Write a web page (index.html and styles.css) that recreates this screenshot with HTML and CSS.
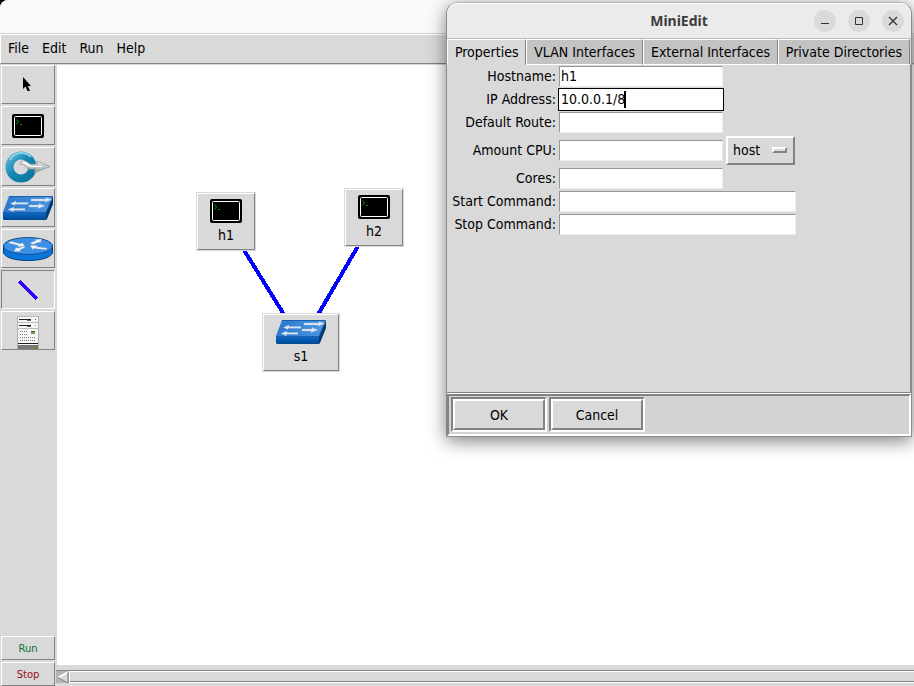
FILE: index.html
```html
<!DOCTYPE html>
<html lang="en">
<head>
<meta charset="utf-8">
<title>MiniEdit</title>
<link rel="stylesheet" href="styles.css">
</head>
<body>
<svg class="defs" width="0" height="0" aria-hidden="true">
  <defs>
    <linearGradient id="g-front" x1="0" y1="0" x2="0" y2="1"><stop offset="0" stop-color="#0a6ccc"/><stop offset="1" stop-color="#004890"/></linearGradient>
    <linearGradient id="g-top" x1="0" y1="0" x2="1" y2="0"><stop offset="0" stop-color="#2a78cc"/><stop offset="1" stop-color="#4c98e4"/></linearGradient>
    <linearGradient id="g-ring" x1="0" y1="0" x2="1" y2="1"><stop offset="0" stop-color="#56b4d8"/><stop offset=".45" stop-color="#1487b4"/><stop offset="1" stop-color="#0a789f"/></linearGradient>
    <linearGradient id="g-silver" x1="0" y1="0" x2="0" y2="1"><stop offset="0" stop-color="#f2f2f2"/><stop offset="1" stop-color="#8e969a"/></linearGradient>
    <symbol id="i-host" viewBox="0 0 32 24">
      <rect width="32" height="24" rx="2" fill="#000"/>
      <rect x="2.5" y="2.5" width="27" height="19" rx="1" fill="#000" stroke="#fff"/>
      <path d="M4.500 5.500l2 2.500-2 2.500M8 10.500h2" fill="none" stroke="#0a9a0a"/>
    </symbol>
    <symbol id="i-switch" viewBox="0 0 50 24">
      <path d="M6 0H50L43 16H0z" fill="url(#g-top)"/>
      <path d="M0 16H43V24H1L0 23z" fill="url(#g-front)"/>
      <path d="M43 16L50 0V8L44 23l-1 1z" fill="#00386f"/>
      <path d="M6 .5H49.500M0 16.500H43L49.500 1" fill="none" stroke="#1d5fa8"/>
      <g fill="#dce8f4" stroke="#aebfd0" stroke-width=".3">
        <path d="M28 3h15V1.500l6 2.300-7 2.300V5H28z"/>
        <path d="M25 6.500H13V5L7.500 7.500 12 9.500V8.200h13z"/>
        <path d="M26 9h10V7.500l6 2.500-7 2.500V11H26z"/>
        <path d="M22 12.500H11V11L5 13.500l5.500 2.300v-1.500H22z"/>
      </g>
    </symbol>
    <symbol id="i-router" viewBox="0 0 50 24">
      <path d="M.5 9V15C.5 20 11 23.500 25 23.500S49.500 20 49.500 15V9z" fill="#0876da" stroke="#003a78"/>
      <ellipse cx="25" cy="9" rx="24.500" ry="8.500" fill="#3b8fe4" stroke="#174f90"/>
      <g fill="#f2f5f8" stroke="#6689ad" stroke-width=".3">
        <path d="M5 6l3-1.800 9 2.500 2.500-1 2.500 3.800-8.500.2 2-1.300z"/>
        <path d="M38.500 2l-1 4-1.800-.8-5.500 2.300-3.500-1.400 6.500-2.700-1.700-1z"/>
        <path d="M27 8.300l8 .2-1.500 1.200 11 1.200-1.500 1.800-12.500-1.300-1 1.300z"/>
        <path d="M11 14.500l2-4.100 1.800.8 5-1.800 2.500 1.200-5.500 2.400 1.800 1.200z"/>
      </g>
    </symbol>
    <symbol id="i-legacy" viewBox="0 0 46 32">
      <circle cx="16" cy="16" r="11.500" fill="none" stroke="url(#g-ring)" stroke-width="8"/>
      <path d="M5 9A13 13 0 0 1 26 6" fill="none" stroke="#8bd0e8" stroke-width="2"/>
      <path d="M16 10.500c5-2 7 1.500 10 2.700l7-.2-1-3L45 15.500 29 22l1.500-4c-6 1-10-.4-11-4-1-.8-2.500-.8-4-.5z" fill="url(#g-silver)" stroke="#7f8b92" stroke-width=".6"/>
      <path d="M18 11.500c3 .5 4 3.500 9 4h10" fill="none" stroke="#fff" stroke-width="1.200"/>
    </symbol>
    <symbol id="i-controller" viewBox="0 0 22 33">
      <rect x=".5" width="21" height="33" fill="#f5f5f5"/>
      <path d="M.5 0V33M21.500 0V33" stroke="#b0b0b0"/>
      <path d="M0 .5H22M1 6.500H21M1 12.500H21" stroke="#bcbcbc"/>
      <path d="M2 3.500H14M2 9.500H14" stroke="#222"/>
      <path d="M10 4.500h4M10 10.500h4" stroke="#666"/>
      <path d="M18 3.500h1" stroke="#c22"/><path d="M18 9.500h1" stroke="#5c3"/>
      <rect x="14" y="15" width="4" height="3" fill="#68a044"/><path d="M14 15.500h4" stroke="#555"/>
      <path d="M3 15.500h8M3 18.500h8M3 21.500h15M3 24.500h15" stroke="#777" stroke-dasharray="1 1"/>
      <rect x="1" y="27" width="20" height="1" fill="#222"/>
      <rect x="1" y="29" width="20" height="4" fill="#777"/>
      <rect x="16" y="31" width="2" height="2" fill="#5a2"/><path d="M18 32.500h1" stroke="#b22"/>
    </symbol>
  </defs>
</svg>

<div class="app">
  <header class="app-title"></header>
  <nav class="menubar">
    <button type="button">File</button>
    <button type="button">Edit</button>
    <button type="button">Run</button>
    <button type="button">Help</button>
  </nav>
  <div class="workspace">
    <aside class="toolbar">
      <button type="button" class="tool" aria-label="Select"><svg width="12" height="16" viewBox="0 0 12 16"><path d="M1 0V12L3.500 9.500 5.500 14H8L6 9H9z" fill="#000"/></svg></button>
      <button type="button" class="tool" aria-label="Host"><svg width="32" height="24"><use href="#i-host"/></svg></button>
      <button type="button" class="tool" aria-label="Legacy switch"><svg width="46" height="32"><use href="#i-legacy"/></svg></button>
      <button type="button" class="tool" aria-label="Switch"><svg width="50" height="24"><use href="#i-switch"/></svg></button>
      <button type="button" class="tool" aria-label="Legacy router"><svg width="50" height="24"><use href="#i-router"/></svg></button>
      <button type="button" class="tool active" aria-label="Link"><svg width="20" height="20" viewBox="0 0 20 20"><path d="M1.500 1.500L19 19" stroke="#3300ff" stroke-width="3" shape-rendering="crispEdges"/></svg></button>
      <button type="button" class="tool tall" aria-label="Controller"><svg width="22" height="33"><use href="#i-controller"/></svg></button>
      <div class="spacer"></div>
      <button type="button" class="tool action run">Run</button>
      <button type="button" class="tool action stop">Stop</button>
    </aside>
    <div class="stage">
      <main class="canvas">
        <svg class="links" width="400" height="400" shape-rendering="crispEdges">
          <path d="M169 156L244 277M318 152L245 277" stroke="#0000ff" stroke-width="4"/>
        </svg>
        <div class="node h1"><svg width="32" height="24"><use href="#i-host"/></svg><span>h1</span></div>
        <div class="node h2"><svg width="32" height="24"><use href="#i-host"/></svg><span>h2</span></div>
        <div class="node s1"><svg width="50" height="24"><use href="#i-switch"/></svg><span>s1</span></div>
      </main>
      <div class="scrollbar">
        <button type="button" class="arrow" aria-label="Scroll left"><svg width="13" height="13" viewBox="0 0 13 13"><path d="M12 1V12L2 6.500z" fill="#d9d9d9"/><path d="M2 6.500L12 1" stroke="#fff" stroke-width="1.500"/><path d="M2 6.500L12 12V1" fill="none" stroke="#828282"/></svg></button>
        <div class="thumb"></div>
      </div>
    </div>
  </div>
</div>

<section class="dialog" role="dialog" aria-labelledby="dialog-title">
  <header class="caption">
    <h1 id="dialog-title">MiniEdit</h1>
    <div class="window-buttons">
      <button type="button" aria-label="Minimize"><svg width="22" height="22"><path d="M7 13.500h8" stroke="#333"/></svg></button>
      <button type="button" aria-label="Maximize"><svg width="22" height="22"><path d="M7.500 7.500h7v7h-7z" fill="none" stroke="#333"/></svg></button>
      <button type="button" aria-label="Close"><svg width="22" height="22"><path d="M7 7l8 8M15 7l-8 8" stroke="#333" stroke-width="1.300"/></svg></button>
    </div>
  </header>
  <div class="tabs" role="tablist">
    <button type="button" role="tab" aria-selected="true" class="selected">Properties</button>
    <button type="button" role="tab">VLAN Interfaces</button>
    <button type="button" role="tab">External Interfaces</button>
    <button type="button" role="tab">Private Directories</button>
  </div>
  <form class="pane" id="properties">
    <label for="hostname">Hostname:</label><input id="hostname" type="text" value="h1">
    <label for="ip">IP Address:</label><div class="focused"><input id="ip" type="text" value="10.0.0.1/8"><span class="caret"></span></div>
    <label for="route">Default Route:</label><input id="route" type="text">
    <label for="cpu">Amount CPU:</label><input id="cpu" type="text">
    <div class="option"><select aria-label="CPU scheduler"><option>host</option><option>cfs</option><option>rt</option></select><span class="indicator"></span></div>
    <label for="cores">Cores:</label><input id="cores" type="text">
    <label for="start">Start Command:</label><input class="wide" id="start" type="text">
    <label for="stop">Stop Command:</label><input class="wide" id="stop" type="text">
  </form>
  <footer class="actions">
    <div class="well"><button type="submit" form="properties">OK</button></div>
    <div class="well"><button type="button">Cancel</button></div>
  </footer>
</section>
</body>
</html>
```

FILE: styles.css
```css
:root {
  --face: #d9d9d9;
  --dark: #828282;
  --light: #ffffff;
}

* { box-sizing: border-box; }

body {
  margin: 0;
  background: #000;
  color: #000;
  font-family: "DejaVu Sans Condensed", "DejaVu Sans", sans-serif;
  font-stretch: condensed;
  font-size: 14px;
  line-height: 17px;
  overflow: hidden;
}

button, input, select {
  font: inherit;
  color: inherit;
  margin: 0;
  padding: 0;
  border: 0;
  border-radius: 0;
  outline: 0;
  background: none;
}

svg { display: block; flex: none; }
.defs { position: absolute; }

.app {
  display: flex;
  flex-direction: column;
  height: 100vh;
  overflow: hidden;
  background: var(--face);
  border-top-left-radius: 8px;
}

.app-title { height: 34px; flex: none; background: #fafafa; border-bottom: 1px solid #cfcfcf; }

.menubar {
  display: flex;
  gap: 13px;
  height: 30px;
  flex: none;
  padding: 0 7px 1px;
  border: 1px solid;
  border-color: var(--light) var(--face) var(--dark) var(--light);
}

.workspace { display: flex; flex: 1; min-height: 0; }

.toolbar {
  display: flex;
  flex-direction: column;
  gap: 2px;
  width: 57px;
  padding: 1px 2px 0 1px;
}

.tool {
  display: flex;
  align-items: center;
  justify-content: center;
  height: 39px;
  flex: none;
  overflow: hidden;
  border: 1px solid;
  border-color: var(--light) var(--dark) var(--dark) var(--light);
}
.tool.active { border-color: var(--dark) var(--light) var(--light) var(--dark); }
.tool.tall { align-items: flex-end; }
.tool.action {
  height: 24px;
  font-family: "DejaVu Sans", sans-serif;
  font-stretch: normal;
  font-size: 10px;
}
.run { color: #107038; }
.stop { color: #981020; }
.spacer { flex: 1; }

.stage { display: flex; flex-direction: column; flex: 1; min-width: 0; padding-top: 1px; }
.canvas { position: relative; flex: 1; background: #fff; overflow: hidden; }
.links { position: absolute; left: 0; top: 0; }

.node {
  position: absolute;
  display: flex;
  flex-direction: column;
  align-items: center;
  gap: 4px;
  width: 58px;
  height: 57px;
  padding-top: 5px;
  background: var(--face);
  border: 1px solid;
  border-color: var(--light) var(--dark) var(--dark) var(--light);
  outline: 1px solid var(--face);
}
.node.h1 { left: 140px; top: 128px; }
.node.h2 { left: 288px; top: 124px; }
.node.s1 { left: 206px; top: 249px; width: 76px; }

.scrollbar { display: flex; height: 21px; padding-top: 5px; margin-left: -1px; }
.scrollbar .arrow { height: 13px; width: 13px; background: #b3b3b3; border-top: 1px solid var(--dark); }
.thumb {
  flex: 1;
  height: 13px;
  border-top: 1px solid var(--dark);
  border-bottom: 1px solid var(--light);
  box-shadow: inset 1px 1px var(--light), inset 0 -1px var(--dark);
}

.dialog {
  position: absolute;
  top: 2px;
  right: 2px;
  width: 466px;
  display: flex;
  flex-direction: column;
  background: var(--face);
  border: 1px solid #8c8c8c;
  border-top-color: #b4b4b4;
  border-radius: 12px 12px 0 0;
  box-shadow: 0 4px 18px rgba(0, 0, 0, .5);
}

.caption {
  display: grid;
  grid-template-columns: 1fr auto 1fr;
  align-items: center;
  height: 36px;
  padding: 0 7px;
  background: #ebebeb;
  border-top: 1px solid #fff;
  border-bottom: 1px solid #b8b8b8;
  border-radius: 11px 11px 0 0;
}
.caption h1 {
  grid-column: 2;
  margin: 0;
  font: bold 14px/20px "Noto Sans", sans-serif;
  color: #3d3d3d;
}
.window-buttons { display: flex; gap: 12px; justify-content: flex-end; }
.window-buttons button { width: 22px; height: 22px; border-radius: 50%; background: #dadada; }

.tabs { display: flex; height: 26px; padding-right: 1px; }
.tabs button {
  flex: auto;
  height: 26px;
  white-space: nowrap;
  background: #c3c3c3;
  border: 1px solid;
  border-color: var(--light) var(--dark) var(--light) var(--light);
  border-top-right-radius: 3px;
}
.tabs .selected { background: var(--face); border-bottom-color: var(--face); }

.pane {
  display: grid;
  grid-template-columns: 111px 166px auto;
  grid-template-rows: 23px 23px 23px 33px repeat(3, 23px);
  align-items: center;
  justify-content: start;
  min-height: 328px;
  align-content: start;
  border-right: 1px solid var(--dark);
  border-bottom: 1px solid var(--dark);
}
.pane label { grid-column: 1; justify-self: end; padding-right: 2px; }
.pane input {
  width: 164px;
  height: 21px;
  margin: 1px;
  padding: 0 1px 1px;
  background: #fff;
  border: 1px solid;
  border-color: #969696 #ececec #ececec #969696;
}
.pane input.wide { grid-column: 2 / 4; width: 237px; }
.pane .focused {
  position: relative;
  height: 23px;
  border: 1px solid #000;
  background: #fff;
}
.pane .focused input { display: block; margin: 0; border-color: #fff; }
.caret { position: absolute; left: 65px; top: 2px; width: 2px; height: 17px; background: #000; }

.option { position: relative; padding: 0 2px; }
.option select {
  display: block;
  appearance: none;
  width: 69px;
  height: 29px;
  padding-left: 5px;
  border: 2px solid;
  border-color: var(--light) var(--dark) var(--dark) var(--light);
}
.indicator {
  position: absolute;
  right: 10px;
  top: 11px;
  width: 15px;
  height: 6px;
  border: 2px solid;
  border-color: var(--light) var(--dark) var(--dark) var(--light);
  pointer-events: none;
}

.actions {
  display: flex;
  gap: 2px;
  height: 42px;
  padding: 1px 2px;
  margin-top: 1px;
  background: #d3d3d3;
  border: 2px solid;
  border-color: var(--dark) var(--light) var(--light) var(--dark);
  box-shadow: 0 -1px #fff;
}
.well {
  width: 96px;
  height: 35px;
  border: 2px solid;
  border-color: var(--dark) var(--light) var(--light) var(--dark);
}
.well button {
  display: block;
  width: 100%;
  height: 100%;
  padding-top: 1px;
  background: var(--face);
  border: 2px solid;
  border-color: var(--light) var(--dark) var(--dark) var(--light);
}
```
